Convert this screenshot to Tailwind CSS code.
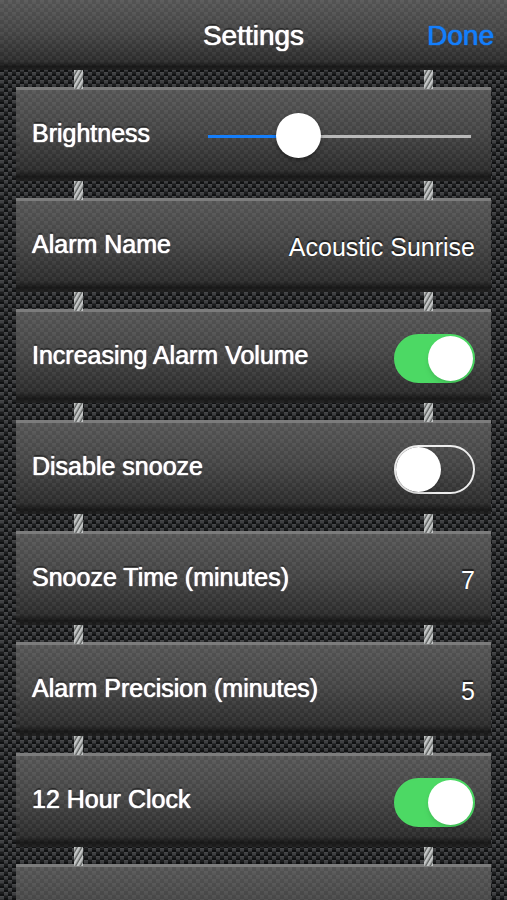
<!DOCTYPE html>
<html lang="en">
<head>
<meta charset="utf-8">
<meta name="viewport" content="width=device-width, initial-scale=1">
<title>Settings</title>
<script src="https://cdn.jsdelivr.net/npm/@tailwindcss/browser@4"></script>
<style>
.weave{background:#1a1b1c url("data:image/svg+xml,%3Csvg xmlns='http://www.w3.org/2000/svg' width='8' height='8' shape-rendering='crispEdges'%3E%3Cpath fill='%23101112' d='M0 0h8v8H0z'/%3E%3Cpath fill='%2348494b' d='M0 0h4v1H0zM4 4h4v1H4z'/%3E%3Cpath fill='%233e3f41' d='M0 1h4v2H0zM4 5h4v2H4z'/%3E%3Cpath fill='%232e2f31' d='M0 3h4v1H0zM4 7h4v1H4z'/%3E%3Cpath fill='%231c1d1e' d='M4 0h4v2H4zM0 4h4v2H0z'/%3E%3C/svg%3E")}
.panel{background-image:linear-gradient(#69696999,#4f4f4f99 45%,#26262699 88%,#101010cc 95%,#161616bb),url("data:image/svg+xml,%3Csvg xmlns='http://www.w3.org/2000/svg' width='8' height='8' shape-rendering='crispEdges'%3E%3Cpath fill='%23333333' d='M0 0h8v8H0z'/%3E%3Cpath fill='%23505050' d='M0 0h4v2H0zM4 4h4v2H4z'/%3E%3Cpath fill='%23484848' d='M0 2h4v2H0zM4 6h4v2H4z'/%3E%3C/svg%3E")}
.strap{background-image:repeating-linear-gradient(120deg,#c4c6c6 0 1px,#989b9a 2px,#5c5f5e 3px,#c4c6c6 4px)}
.lbl{text-shadow:0 0 1px #fff,0 0 1px #fff,0 -2px 1px #0008}
.val{text-shadow:0 -2px 1px #0009}
.done{text-shadow:0 0 1px #147efb,0 0 1px #147efb}
.range{background:linear-gradient(90deg,#147efb 0 34%,#b8b8b8 34%) center 22px/100% 3px no-repeat}
.range::-webkit-slider-thumb{appearance:none;width:45px;height:45px;border-radius:50%;background:#fff;box-shadow:0 2px 4px #0006}
.list{scrollbar-width:none}
</style>
</head>
<body class="weave flex h-screen flex-col text-white" style="font-family:'Liberation Sans',Arial,sans-serif">
<header class="panel grid h-[70px] shrink-0 grid-cols-[1fr_auto_1fr] items-center px-[13px] pt-[2px] text-[28px]">
<h1 class="lbl col-start-2">Settings</h1>
<button type="button" class="done justify-self-end text-[#147efb]">Done</button>
</header>
<main id="rows" class="list min-h-0 flex-1 overflow-y-auto px-4 text-[25px]"></main>
<template id="row">
<section>
<div class="relative z-10 -mb-[2px] flex h-[19px] justify-between px-[58px]"><i class="strap w-[9px]"></i><i class="strap w-[9px]"></i></div>
<div class="panel flex h-[94px] items-center justify-between border-t-3 border-[#7c7c7c] px-4"><label class="lbl pb-[3px] whitespace-nowrap"></label></div>
</section>
</template>
<script>
const rows=[
['Brightness','<input id="f0" type="range" value="31" class="range mr-1 h-[45px] w-[263px] appearance-none">'],
['Alarm Name','<button id="f1" type="button" class="val pt-[2px]">Acoustic Sunrise</button>'],
['Increasing Alarm Volume',true],
['Disable snooze',false],
['Snooze Time (minutes)','<output id="f4" class="val pt-[2px]">7</output>'],
['Alarm Precision (minutes)','<output id="f5" class="val pt-[2px]">5</output>'],
['12 Hour Clock',true],
['','']
];
rows.forEach(([name,control],i)=>{
const node=document.getElementById('row').content.cloneNode(true);
const label=node.querySelector('label');
if(!name){label.remove()}else{
label.textContent=name;label.htmlFor='f'+i;
label.insertAdjacentHTML('afterend',typeof control==='string'?control:`<span class="relative mt-[2px] block h-[49px] w-[81px]"><input id="f${i}" type="checkbox" role="switch" ${control?'checked':''} class="peer block h-full w-full appearance-none rounded-full border-2 border-[#eee] checked:border-[#4cd964] checked:bg-[#4cd964]"><span class="pointer-events-none absolute top-[2px] left-[2px] size-[45px] rounded-full bg-white shadow-md peer-checked:left-[34px]"></span></span>`);
}
document.getElementById('rows').append(node);
});
</script>
</body>
</html>
